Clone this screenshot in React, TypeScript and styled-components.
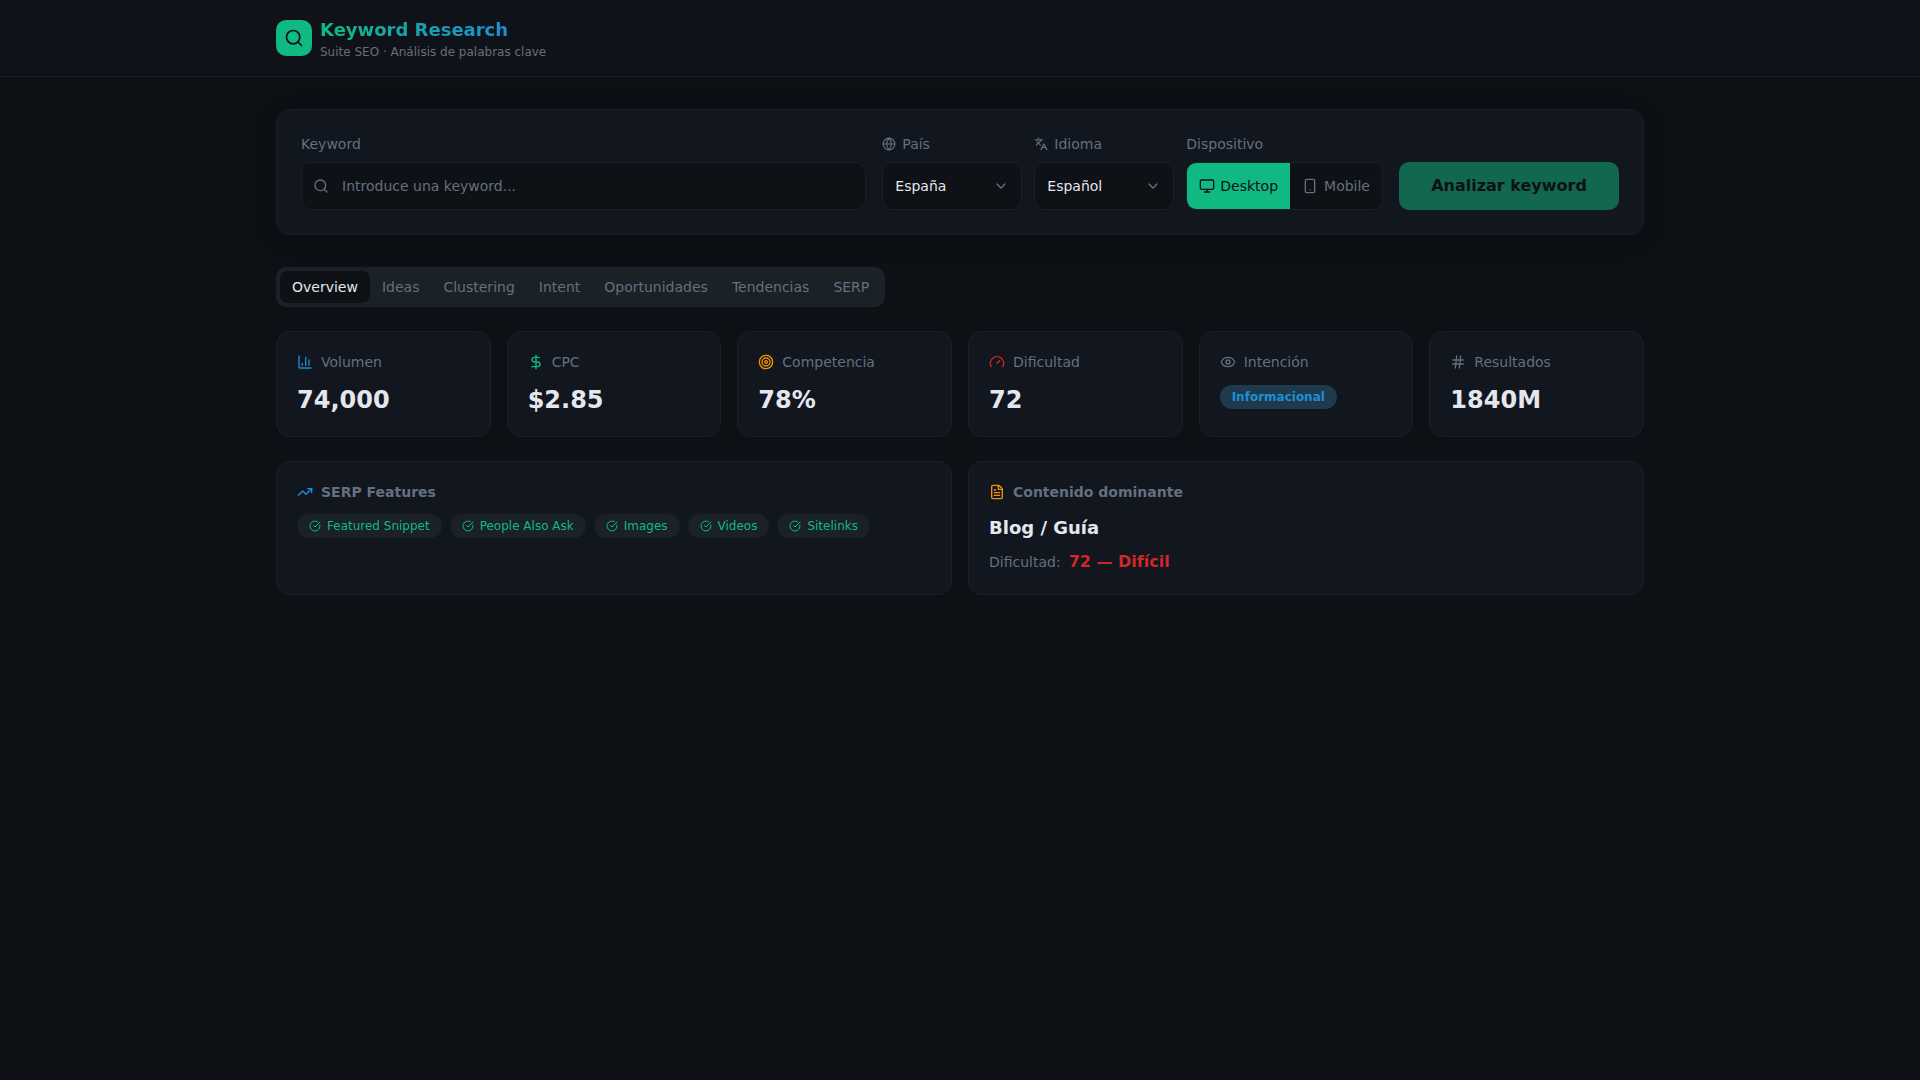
import React from "react";
import styled, { createGlobalStyle } from "styled-components";
import {
  Search, Globe, Languages, Monitor, Smartphone, ChevronDown, ChartColumn, DollarSign,
  Target, Gauge, Eye, Hash, TrendingUp, CircleCheckBig, FileText,
} from "lucide-react";

const BG = "#0d1116";
const CARD = "#11161f";
const BORDER = "#1b2128";
const INPUT = "#0e1116";
const MUTED = "#64707f";
const TEXT = "#e4e7ed";
const GREEN = "#10b981";
const BLUE = "#1d8fd6";
const ORANGE = "#f59200";
const RED = "#d02828";

const Global = createGlobalStyle`
  html, body { margin: 0; padding: 0; background: ${BG}; }
  body { font-family: "DejaVu Sans", "Liberation Sans", sans-serif; color: ${TEXT}; min-height: 100vh; }
  * { box-sizing: border-box; }
`;

const Header = styled.header`
  height: 77px;
  border-bottom: 1px solid ${BORDER};
  background: #0f1319;
`;
const Container = styled.div`
  max-width: 1400px;
  margin: 0 auto;
  padding: 0 16px;
`;
const Brand = styled.div`
  display: flex;
  align-items: center;
  gap: 8px;
  height: 76px;
`;
const LogoBox = styled.div`
  width: 36px;
  height: 36px;
  border-radius: 10px;
  background: ${GREEN};
  color: ${BG};
  display: flex;
  align-items: center;
  justify-content: center;
`;
const BrandTitle = styled.h1`
  margin: 0;
  font-size: 18px;
  line-height: 28px;
  font-weight: 700;
  background: linear-gradient(90deg, ${GREEN}, ${BLUE});
  -webkit-background-clip: text;
  background-clip: text;
  color: transparent;
  width: fit-content;
`;
const BrandSub = styled.p`
  margin: 0;
  font-size: 12px;
  line-height: 16px;
  color: ${MUTED};
`;
const Main = styled(Container)`
  padding-top: 32px;
`;
const SearchCard = styled.section`
  background: ${CARD};
  border: 1px solid ${BORDER};
  border-radius: 14px;
  padding: 24px;
  margin-bottom: 32px;
  box-shadow: 0 4px 24px rgba(0, 0, 0, 0.3);
  display: flex;
  align-items: flex-end;
  gap: 16px;
`;
const Filters = styled.div`
  display: flex;
  align-items: flex-end;
  gap: 12px;
`;
const Field = styled.div<{ $grow?: boolean; $width?: number }>`
  flex: ${(p) => (p.$grow ? "1 1 0" : "0 0 auto")};
  width: ${(p) => (p.$width ? `${p.$width}px` : "auto")};
  min-width: 0;
`;
const Label = styled.div`
  display: flex;
  align-items: center;
  gap: 6px;
  font-size: 14px;
  line-height: 20px;
  color: ${MUTED};
  margin-bottom: 8px;
`;
const InputWrap = styled.div`
  position: relative;
  color: ${MUTED};
  svg {
    position: absolute;
    left: 12px;
    top: 16px;
  }
`;
const KeywordInput = styled.input`
  width: 100%;
  height: 48px;
  padding: 0 12px 0 40px;
  border: 1px solid ${BORDER};
  border-radius: 10px;
  background: ${INPUT};
  color: ${TEXT};
  font: 14px "DejaVu Sans", sans-serif;
  outline: none;
  &::placeholder {
    color: ${MUTED};
  }
`;
const Select = styled.div`
  height: 48px;
  padding: 0 12px;
  border: 1px solid ${BORDER};
  border-radius: 10px;
  background: ${INPUT};
  color: ${TEXT};
  font-size: 14px;
  display: flex;
  align-items: center;
  justify-content: space-between;
  svg {
    color: ${MUTED};
  }
`;
const DeviceGroup = styled.div`
  display: flex;
  height: 48px;
  border: 1px solid ${BORDER};
  border-radius: 10px;
  overflow: hidden;
  background: ${INPUT};
`;
const DeviceButton = styled.div<{ $active?: boolean }>`
  display: flex;
  align-items: center;
  gap: ${(p) => (p.$active ? "5px" : "6px")};
  padding: 0 12px;
  font-size: 14px;
  background: ${(p) => (p.$active ? GREEN : "transparent")};
  color: ${(p) => (p.$active ? BG : MUTED)};
`;
const AnalyzeButton = styled.button`
  width: 220px;
  height: 48px;
  border: 0;
  border-radius: 10px;
  padding: 0 0 2px;
  background: #12674f;
  color: ${BG};
  font: 700 16px "DejaVu Sans", sans-serif;
`;
const TabList = styled.div`
  display: inline-flex;
  height: 40px;
  padding: 4px;
  border-radius: 10px;
  background: #1a2127;
  margin-bottom: 24px;
  vertical-align: top;
`;
const Tab = styled.div<{ $active?: boolean }>`
  padding: 6px 12px;
  font-size: 14px;
  line-height: 20px;
  border-radius: 8px;
  background: ${(p) => (p.$active ? BG : "transparent")};
  color: ${(p) => (p.$active ? TEXT : MUTED)};
`;
const MetricGrid = styled.div`
  display: grid;
  grid-template-columns: repeat(6, 1fr);
  gap: 16px;
  margin-bottom: 24px;
`;
const Card = styled.div`
  background: ${CARD};
  border: 1px solid ${BORDER};
  border-radius: 14px;
  padding: 20px;
`;
const MetricLabel = styled.div`
  display: flex;
  align-items: center;
  gap: 8px;
  font-size: 14px;
  line-height: 20px;
  color: ${MUTED};
  margin-bottom: 12px;
`;
const MetricValue = styled.div`
  font-size: 24px;
  line-height: 32px;
  font-weight: 700;
  color: ${TEXT};
`;
const IntentBadge = styled.span`
  display: inline-flex;
  align-items: center;
  height: 24px;
  margin-top: 1px;
  padding: 0 12px;
  border-radius: 999px;
  background: #1f394d;
  color: ${BLUE};
  font-size: 12px;
  font-weight: 700;
`;
const PanelGrid = styled.div`
  display: grid;
  grid-template-columns: 1fr 1fr;
  gap: 16px;
`;
const PanelTitle = styled.div`
  display: flex;
  align-items: center;
  gap: 8px;
  font-size: 14px;
  line-height: 20px;
  font-weight: 700;
  color: ${MUTED};
  margin-bottom: 12px;
`;
const ChipRow = styled.div`
  display: flex;
  flex-wrap: wrap;
  gap: 8px;
`;
const Chip = styled.span`
  display: inline-flex;
  align-items: center;
  gap: 6px;
  height: 24px;
  padding: 0 12px;
  border-radius: 999px;
  background: #1a2127;
  color: ${GREEN};
  font-size: 12px;
`;
const ContentType = styled.div`
  font-size: 18px;
  line-height: 28px;
  font-weight: 700;
  color: ${TEXT};
  margin-bottom: 8px;
`;
const DifficultyRow = styled.div`
  display: flex;
  align-items: baseline;
  gap: 8px;
  font-size: 14px;
  line-height: 24px;
  color: ${MUTED};
`;
const DifficultyValue = styled.span`
  font-size: 16px;
  font-weight: 700;
  color: ${RED};
`;

const tabs = ["Overview", "Ideas", "Clustering", "Intent", "Oportunidades", "Tendencias", "SERP"];
const chips = ["Featured Snippet", "People Also Ask", "Images", "Videos", "Sitelinks"];

export default function App() {
  return (
    <>
      <Global />
      <Header>
        <Container>
          <Brand>
            <LogoBox>
              <Search size={20} />
            </LogoBox>
            <div>
              <BrandTitle>Keyword Research</BrandTitle>
              <BrandSub>Suite SEO · Análisis de palabras clave</BrandSub>
            </div>
          </Brand>
        </Container>
      </Header>
      <Main>
        <SearchCard>
          <Field $grow>
            <Label>Keyword</Label>
            <InputWrap>
              <Search size={16} />
              <KeywordInput placeholder="Introduce una keyword..." />
            </InputWrap>
          </Field>
          <Filters>
            <Field $width={140}>
              <Label>
                <Globe size={14} />
                País
              </Label>
              <Select>
                España
                <ChevronDown size={16} />
              </Select>
            </Field>
            <Field $width={140}>
              <Label>
                <Languages size={14} />
                Idioma
              </Label>
              <Select>
                Español
                <ChevronDown size={16} />
              </Select>
            </Field>
            <Field>
              <Label>Dispositivo</Label>
              <DeviceGroup>
                <DeviceButton $active>
                  <Monitor size={16} />
                  Desktop
                </DeviceButton>
                <DeviceButton>
                  <Smartphone size={16} />
                  Mobile
                </DeviceButton>
              </DeviceGroup>
            </Field>
          </Filters>
          <AnalyzeButton>Analizar keyword</AnalyzeButton>
        </SearchCard>

        <TabList>
          {tabs.map((t, i) => (
            <Tab key={t} $active={i === 0}>
              {t}
            </Tab>
          ))}
        </TabList>

        <MetricGrid>
          <Card>
            <MetricLabel>
              <ChartColumn size={16} color={BLUE} />
              Volumen
            </MetricLabel>
            <MetricValue>74,000</MetricValue>
          </Card>
          <Card>
            <MetricLabel>
              <DollarSign size={16} color={GREEN} />
              CPC
            </MetricLabel>
            <MetricValue>$2.85</MetricValue>
          </Card>
          <Card>
            <MetricLabel>
              <Target size={16} color={ORANGE} />
              Competencia
            </MetricLabel>
            <MetricValue>78%</MetricValue>
          </Card>
          <Card>
            <MetricLabel>
              <Gauge size={16} color={RED} />
              Dificultad
            </MetricLabel>
            <MetricValue>72</MetricValue>
          </Card>
          <Card>
            <MetricLabel>
              <Eye size={16} />
              Intención
            </MetricLabel>
            <IntentBadge>Informacional</IntentBadge>
          </Card>
          <Card>
            <MetricLabel>
              <Hash size={16} />
              Resultados
            </MetricLabel>
            <MetricValue>1840M</MetricValue>
          </Card>
        </MetricGrid>

        <PanelGrid>
          <Card>
            <PanelTitle>
              <TrendingUp size={16} color={BLUE} />
              SERP Features
            </PanelTitle>
            <ChipRow>
              {chips.map((c) => (
                <Chip key={c}>
                  <CircleCheckBig size={12} />
                  {c}
                </Chip>
              ))}
            </ChipRow>
          </Card>
          <Card>
            <PanelTitle>
              <FileText size={16} color={ORANGE} />
              Contenido dominante
            </PanelTitle>
            <ContentType>Blog / Guía</ContentType>
            <DifficultyRow>
              Dificultad:
              <DifficultyValue>72 — Difícil</DifficultyValue>
            </DifficultyRow>
          </Card>
        </PanelGrid>
      </Main>
    </>
  );
}
